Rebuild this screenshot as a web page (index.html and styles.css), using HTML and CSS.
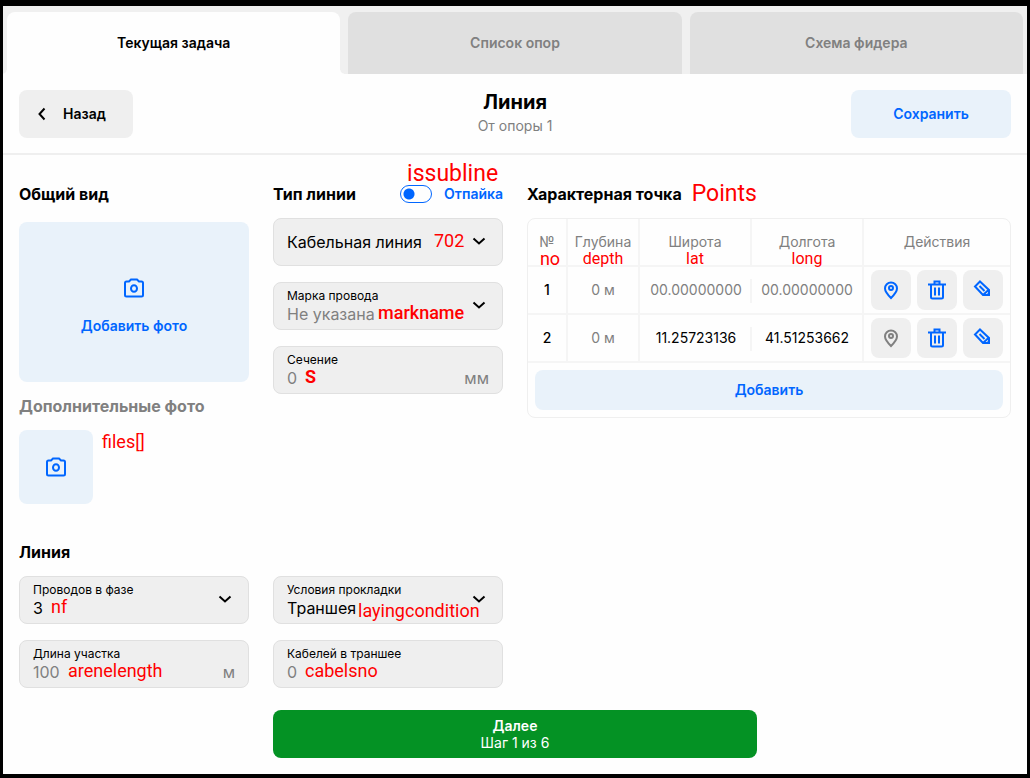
FILE: index.html
```html
<!DOCTYPE html>
<html lang="ru">
<head>
<meta charset="utf-8">
<title>Линия</title>
<link rel="stylesheet" href="styles.css">
</head>
<body>
<svg class="sprite" aria-hidden="true">
  <symbol id="camera" viewBox="0 0 24 24"><path d="M8 4.500 9 3.500h6l1 1 1 1h2.500A1.500 1.500 0 0 1 21 7v12a1.500 1.500 0 0 1-1.500 1.500h-15A1.500 1.500 0 0 1 3 19V7a1.500 1.500 0 0 1 1.500-1.500H7z"/><ellipse cx="12" cy="12.500" rx="3" ry="3.300"/></symbol>
  <symbol id="chevron" viewBox="0 0 14 8"><path d="m1.500 1.500 5.500 5 5.500-5"/></symbol>
  <symbol id="pin" viewBox="0 0 24 24"><path d="M12 20c-3-3-6-6.200-6-9.500a6 6 0 0 1 12 0c0 3.300-3 6.500-6 9.500z"/><circle cx="12" cy="10" r="2"/></symbol>
  <symbol id="trash" viewBox="0 0 24 24"><path d="M3 6.500h18M9.500 6V3.500h5V6M6 7v12a1.500 1.500 0 0 0 1.500 1.500h9A1.500 1.500 0 0 0 18 19V7M10 9.500v8M14 9.500v8"/></symbol>
  <symbol id="pencil" viewBox="0 0 24 24"><path d="M9 3.500 18 12v5h-6L4 8.500z"/><path d="m8.500 8 5 5M12 17l6-5.500"/><path class="tip" d="M19 13v5h-5z"/></symbol>
</svg>
<div class="app">
  <nav class="tabs">
    <button class="tab tab-active">Текущая задача</button>
    <button class="tab">Список опор</button>
    <button class="tab">Схема фидера</button>
  </nav>
  <header class="header">
    <button class="back"><svg class="arrow"><use href="#chevron"/></svg>Назад</button>
    <div class="title"><h1>Линия</h1><p>От опоры 1</p></div>
    <button class="save">Сохранить</button>
  </header>
  <main class="content">
    <div class="grid top">
      <section>
        <h2>Общий вид</h2>
        <button class="photo"><svg><use href="#camera"/></svg>Добавить фото</button>
        <h2 class="muted">Дополнительные фото</h2>
        <div class="files">
          <button class="thumb" aria-label="Добавить дополнительное фото"><svg><use href="#camera"/></svg></button>
          <span class="note">files[]</span>
        </div>
      </section>
      <section class="stack">
        <div class="heading">
          <h2>Тип линии</h2>
          <div class="switch">
            <input id="subline" type="checkbox"><label for="subline">Отпайка</label>
            <span class="note large over-switch">issubline</span>
          </div>
        </div>
        <div class="field single">
          <select aria-label="Тип линии"><option>Кабельная линия</option></select>
          <svg class="chevron"><use href="#chevron"/></svg>
          <span class="note at-type">702</span>
        </div>
        <div class="field">
          <label for="mark">Марка провода</label>
          <select id="mark" class="empty"><option>Не указана</option></select>
          <svg class="chevron"><use href="#chevron"/></svg>
          <span class="note strong at-mark">markname</span>
        </div>
        <div class="field">
          <label for="section">Сечение</label>
          <input id="section" type="text" placeholder="0">
          <span class="unit">мм</span>
          <span class="note bold at-short">S</span>
        </div>
      </section>
      <section class="wide">
        <div class="heading points"><h2>Характерная точка</h2><span class="note large">Points</span></div>
        <div class="panel">
          <table>
            <colgroup><col class="c-no"><col class="c-depth"><col><col><col class="c-actions"></colgroup>
            <thead>
              <tr>
                <th>№<span class="note small right">no</span></th>
                <th>Глубина<span class="note small">depth</span></th>
                <th>Широта<span class="note small">lat</span></th>
                <th>Долгота<span class="note small">long</span></th>
                <th>Действия</th>
              </tr>
            </thead>
            <tbody>
              <tr>
                <td class="num">1</td><td>0 м</td><td class="lat">00.00000000</td><td>00.00000000</td>
                <td><div class="actions">
                  <button aria-label="На карте"><svg><use href="#pin"/></svg></button>
                  <button aria-label="Удалить"><svg><use href="#trash"/></svg></button>
                  <button aria-label="Изменить"><svg><use href="#pencil"/></svg></button>
                </div></td>
              </tr>
              <tr class="filled">
                <td class="num">2</td><td class="depth">0 м</td><td class="lat">11.25723136</td><td>41.51253662</td>
                <td><div class="actions">
                  <button class="inactive" aria-label="На карте"><svg><use href="#pin"/></svg></button>
                  <button aria-label="Удалить"><svg><use href="#trash"/></svg></button>
                  <button aria-label="Изменить"><svg><use href="#pencil"/></svg></button>
                </div></td>
              </tr>
            </tbody>
          </table>
          <button class="add">Добавить</button>
        </div>
      </section>
    </div>
    <h2 class="line-heading">Линия</h2>
    <div class="grid">
      <div class="stack">
        <div class="field">
          <label for="phase">Проводов в фазе</label>
          <select id="phase"><option>3</option></select>
          <svg class="chevron"><use href="#chevron"/></svg>
          <span class="note at-short">nf</span>
        </div>
        <div class="field">
          <label for="length">Длина участка</label>
          <input id="length" type="text" placeholder="100">
          <span class="unit">м</span>
          <span class="note at-length">arenelength</span>
        </div>
      </div>
      <div class="stack">
        <div class="field">
          <label for="laying">Условия прокладки</label>
          <select id="laying"><option>Траншея</option></select>
          <svg class="chevron"><use href="#chevron"/></svg>
          <span class="note at-laying">layingcondition</span>
        </div>
        <div class="field">
          <label for="cables">Кабелей в траншее</label>
          <input id="cables" type="text" placeholder="0">
          <span class="note at-short">cabelsno</span>
        </div>
      </div>
    </div>
    <div class="grid">
      <button class="next"><strong>Далее</strong><span>Шаг 1 из 6</span></button>
    </div>
  </main>
</div>
</body>
</html>
```
FILE: styles.css
```css
* { box-sizing: border-box; }
body {
  margin: 0;
  padding: 6px 3px 4px;
  background: #000;
  color: #000;
  font: 14px/20px Inter, Roboto, sans-serif;
}
.sprite { position: absolute; width: 0; height: 0; }
svg { display: block; fill: none; stroke: currentColor; stroke-width: 2; }
h1, h2, p { margin: 0; }
button, input, select { font: inherit; color: inherit; margin: 0; }
button { border: 0; border-radius: 8px; padding: 0; font-weight: 600; cursor: pointer; }
.app { min-height: calc(100vh - 10px); background: #fefefe; }

.tabs { display: flex; gap: 8px; padding: 6px 4px 0; background: #f0f0f0; }
.tab { flex: 1; height: 62px; border-radius: 8px 8px 0 0; background: #e0e0e0; color: #808080; }
.tab-active { position: relative; background: #fefefe; color: #000; }
.tab-active::before, .tab-active::after {
  content: "";
  position: absolute; bottom: 0; width: 4px; height: 4px;
}
.tab-active::before { right: 100%; background: radial-gradient(circle at 0 0, transparent 3px, #fefefe 4px); }
.tab-active::after { left: 100%; background: radial-gradient(circle at 100% 0, transparent 3px, #fefefe 4px); }

.header {
  display: grid;
  grid-template-columns: 1fr auto 1fr;
  padding: 16px 16px 15px;
  border-bottom: 2px solid #efefef;
}
.back {
  display: flex; align-items: center; gap: 14px;
  height: 48px; padding: 0 27px 0 16px;
  justify-self: start; background: #efefef;
}
.arrow { width: 14px; height: 8px; transform: rotate(90deg); }
.save { justify-self: end; width: 160px; height: 48px; background: #e9f2fa; color: #06f; }
.title { text-align: center; }
.title h1 { font-size: 20px; line-height: 24px; font-weight: 700; }
.title p { line-height: 24px; color: #808080; }

.content { padding: 27px 16px 16px; }
.grid { display: grid; grid-template-columns: repeat(4, minmax(0, 1fr)); gap: 16px 24px; align-items: start; }
.wide { grid-column: span 2; }
h2 { font-size: 16px; line-height: 24px; font-weight: 700; }
.muted { color: #808080; margin: 12px 0; }
.photo {
  display: flex; flex-direction: column; align-items: center; justify-content: center; gap: 16px;
  width: 100%; height: 160px; margin-top: 16px; padding-top: 8px;
  background: #e9f2fa; color: #06f;
}
.photo svg, .thumb svg { width: 24px; height: 24px; }
.files { display: flex; gap: 9px; }
.thumb { display: grid; place-items: center; width: 74px; height: 74px; background: #e9f2fa; color: #06f; }
.stack { display: grid; gap: 16px; }
.heading { display: flex; justify-content: space-between; align-items: center; height: 24px; }
.stack .heading { margin-bottom: -4px; }
.points { justify-content: flex-start; gap: 10px; }
.switch { position: relative; display: flex; align-items: center; gap: 12px; line-height: 16px; color: #06f; font-weight: 600; }
.switch input {
  appearance: none; width: 32px; height: 18px; margin: 0;
  border: 1px solid #06f; border-radius: 9px;
  background: radial-gradient(circle at 8px 8px, #06f 5px, transparent 6px);
}

.note { font: 18px/24px Roboto, sans-serif; color: #f00; white-space: nowrap; }
.large { font-size: 23px; }
.strong { font-weight: 500; }
.bold { font-weight: 700; }
.over-switch { position: absolute; left: 7px; bottom: 17px; }

.field {
  position: relative;
  display: flex; flex-direction: column;
  height: 48px; padding: 5px 13px;
  border: 1px solid #e0e0e0; border-radius: 8px; background: #efefef;
}
.field label { font-size: 12px; line-height: 16px; }
.field select, .field input {
  appearance: none; width: 100%; height: 20px; padding: 0;
  border: 0; background: transparent; font-size: 16px; line-height: 20px;
}
.field input::placeholder { color: #808080; opacity: 1; }
.field .empty { color: #808080; }
.single { justify-content: center; }
.chevron { position: absolute; right: 16px; top: 18px; width: 14px; height: 8px; pointer-events: none; }
.unit { position: absolute; right: 13px; bottom: 5px; font-size: 16px; color: #808080; }
.field .note { position: absolute; top: 18px; pointer-events: none; }
.field .at-type { left: 160px; top: 10px; }
.field .at-mark { left: 104px; }
.field .at-short { left: 31px; }
.field .at-length { left: 48px; }
.field .at-laying { left: 84px; top: 22px; }

.panel { margin-top: 12px; border: 1px solid #efefef; border-radius: 8px; }
table { width: 100%; table-layout: fixed; border-collapse: separate; border-spacing: 0; }
.c-no { width: 40px; }
.c-depth { width: 72px; }
.c-actions { width: 146px; }
th, td {
  position: relative; height: 48px; padding: 0;
  border-bottom: 2px solid #f5f5f5; border-right: 2px solid #f5f5f5;
  color: #808080; font-weight: 400; text-align: center;
}
th:last-child, td:last-child { border-right: 0; }
.num, .filled td { color: #000; }
.num { font-weight: 500; }
.filled .depth { color: #808080; }
td.lat { border-right: 0; }
td.lat::after { content: ""; position: absolute; right: 0; top: 12px; width: 2px; height: 24px; background: #f5f5f5; }
.small { position: absolute; left: 0; right: 0; bottom: -2px; font-size: 16px; line-height: 16px; }
.right { left: 6px; font-size: 18px; }
.actions { display: flex; justify-content: center; gap: 6px; }
.actions button { display: grid; place-items: center; width: 40px; height: 40px; background: #efefef; color: #06f; }
.actions .inactive { color: #808080; }
.actions svg { width: 24px; height: 24px; }
.tip { fill: currentColor; stroke: none; }
.add { display: block; width: calc(100% - 14px); height: 40px; margin: 7px; background: #e9f2fa; color: #06f; }

.line-heading { margin: 36px 0 12px; }
.next {
  grid-column: 2 / span 2;
  display: flex; flex-direction: column; align-items: center; justify-content: center;
  height: 48px; margin-top: 22px; background: #049224; color: #fff;
}
.next strong, .next span { line-height: 17px; }
.next strong { font-weight: 600; }
.next span { font-weight: 400; }
```
